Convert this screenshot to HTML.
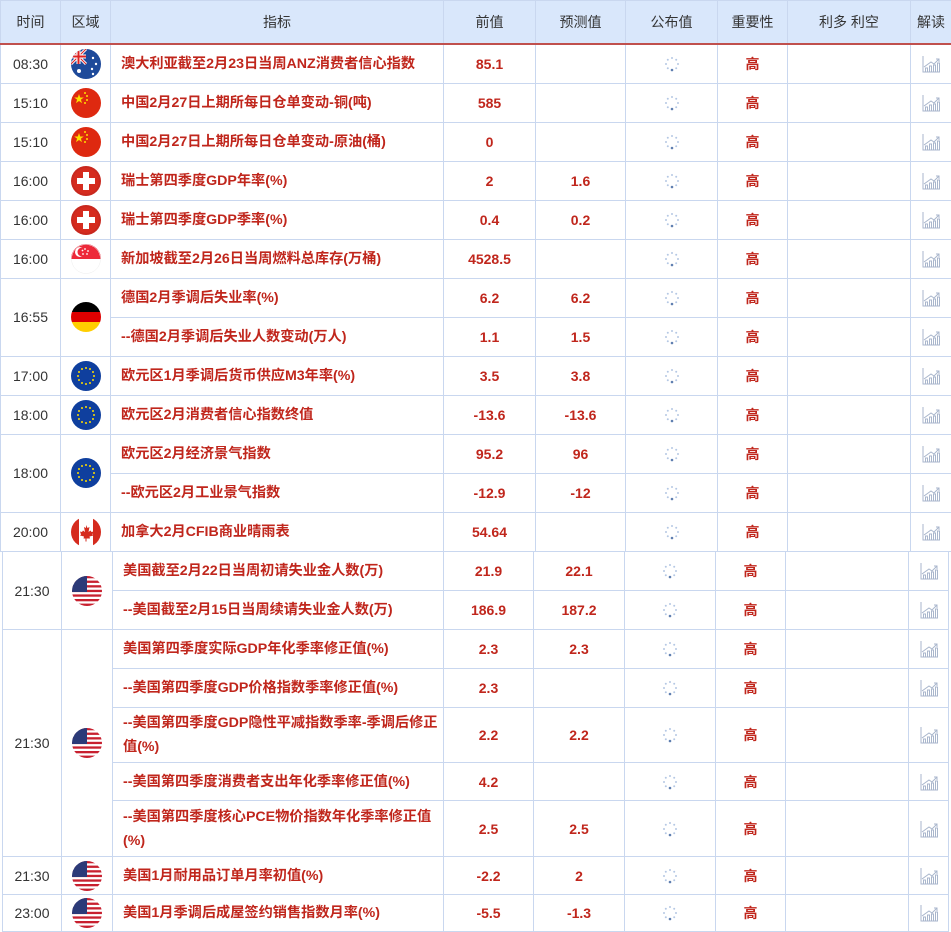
<!DOCTYPE html>
<html><head><meta charset="utf-8">
<style>
body{margin:0;width:951px;height:930px;overflow:hidden;background:#fff;font-family:"Liberation Sans","Noto Sans CJK SC",sans-serif;font-size:14px;color:#333;position:relative}
table{border-collapse:collapse;table-layout:fixed;position:absolute}
td,th{border:1px solid #c9d7ef;padding:0;text-align:center;vertical-align:middle;overflow:hidden}
th{background:#d9e7fb;font-weight:normal;color:#333;height:42px;border-bottom:2px solid #c0504d}
.n{color:#c0261c;font-weight:bold}
.i{text-align:left;padding-left:10px;color:#c0261c;font-weight:bold;line-height:24px;font-size:14.2px}
.g{color:#c0261c;font-weight:bold}
svg.f{width:30px;height:30px;display:block;margin:auto}
svg.l{width:16px;height:16px;display:block;margin:auto}
svg.c{width:20px;height:20px;display:block;margin:auto}
</style></head><body>
<svg width="0" height="0" style="position:absolute">
<defs>
<clipPath id="cc"><circle cx="15" cy="15" r="15"/></clipPath>
<symbol id="au" viewBox="0 0 30 30"><g clip-path="url(#cc)"><rect width="30" height="30" fill="#1e4a9a"/><rect width="15" height="15" fill="#1e4a9a"/><path d="M0 0L15 15M15 0L0 15" stroke="#fff" stroke-width="3"/><path d="M0 0L15 15M15 0L0 15" stroke="#d22" stroke-width="1"/><path d="M7.5 0V15M0 7.5H15" stroke="#fff" stroke-width="4"/><path d="M7.5 0V15M0 7.5H15" stroke="#d22" stroke-width="2"/><circle cx="8" cy="22" r="2" fill="#fff"/><circle cx="22" cy="9" r="1.2" fill="#fff"/><circle cx="25" cy="15" r="1.2" fill="#fff"/><circle cx="21" cy="20" r="1.2" fill="#fff"/><circle cx="22" cy="25" r="1.2" fill="#fff"/></g></symbol>
<symbol id="cn" viewBox="0 0 30 30"><circle cx="15" cy="15" r="15" fill="#de2910"/><path d="M8 6l1.2 3.5h3.6l-2.9 2.1 1.1 3.5L8 13l-3 2.1 1.1-3.5L3.2 9.5h3.6z" fill="#ffde00"/><circle cx="14" cy="5" r="1" fill="#ffde00"/><circle cx="16" cy="8" r="1" fill="#ffde00"/><circle cx="16" cy="12" r="1" fill="#ffde00"/><circle cx="14" cy="15" r="1" fill="#ffde00"/></symbol>
<symbol id="ch" viewBox="0 0 30 30"><circle cx="15" cy="15" r="15" fill="#c8281e"/><circle cx="15" cy="15" r="13" fill="#d52b1e"/><path d="M12 6h6v6h6v6h-6v6h-6v-6H6v-6h6z" fill="#fff"/></symbol>
<symbol id="sg" viewBox="0 0 30 30"><g clip-path="url(#cc)"><rect width="30" height="30" fill="#fff"/><rect width="30" height="15" fill="#ed2939"/><circle cx="9" cy="8" r="5" fill="#fff"/><circle cx="11" cy="8" r="4.5" fill="#ed2939"/><circle cx="14" cy="5" r=".9" fill="#fff"/><circle cx="17" cy="7" r=".9" fill="#fff"/><circle cx="16" cy="10" r=".9" fill="#fff"/><circle cx="12" cy="10" r=".9" fill="#fff"/><circle cx="11.5" cy="6.5" r=".9" fill="#fff"/></g><circle cx="15" cy="15" r="14.5" fill="none" stroke="#eee" stroke-width=".5"/></symbol>
<symbol id="de" viewBox="0 0 30 30"><g clip-path="url(#cc)"><rect width="30" height="10" fill="#000"/><rect y="10" width="30" height="10" fill="#dd0000"/><rect y="20" width="30" height="10" fill="#ffce00"/></g></symbol>
<symbol id="eu" viewBox="0 0 30 30"><circle cx="15" cy="15" r="15" fill="#0f3f9e"/><g fill="#ffdd00"><circle cx="15" cy="7" r="1"/><circle cx="19" cy="8" r="1"/><circle cx="22" cy="11" r="1"/><circle cx="23" cy="15" r="1"/><circle cx="22" cy="19" r="1"/><circle cx="19" cy="22" r="1"/><circle cx="15" cy="23" r="1"/><circle cx="11" cy="22" r="1"/><circle cx="8" cy="19" r="1"/><circle cx="7" cy="15" r="1"/><circle cx="8" cy="11" r="1"/><circle cx="11" cy="8" r="1"/></g></symbol>
<symbol id="ca" viewBox="0 0 30 30"><g clip-path="url(#cc)"><rect width="30" height="30" fill="#fff"/><rect width="8" height="30" fill="#d52b1e"/><rect x="22" width="8" height="30" fill="#d52b1e"/><path d="M15 8l1.5 3 2-1-1 5 2-1.5 1 1.5 2-.5-1 3 1 1-4 1 .5 2H15.5v3h-1v-3H12.5l.5-2-4-1 1-1-1-3 2 .5 1-1.5 2 1.5-1-5 2 1z" fill="#d52b1e"/></g></symbol>
<symbol id="us" viewBox="0 0 30 30"><g clip-path="url(#cc)"><rect width="30" height="30" fill="#fff"/><g fill="#c8202f"><rect y="0" width="30" height="2.3"/><rect y="4.6" width="30" height="2.3"/><rect y="9.2" width="30" height="2.3"/><rect y="13.8" width="30" height="2.3"/><rect y="18.4" width="30" height="2.3"/><rect y="23" width="30" height="2.3"/><rect y="27.6" width="30" height="2.4"/></g><rect width="15" height="16" fill="#2c3a78"/></g></symbol>
<symbol id="ld" viewBox="0 0 16 16"><g fill="#b5c8e4"><circle cx="8" cy="2" r="1"/><circle cx="12.2" cy="3.8" r="1"/><circle cx="14" cy="8" r="1"/><circle cx="12.2" cy="12.2" r="1"/><circle cx="3.8" cy="12.2" r="1"/><circle cx="2" cy="8" r="1"/><circle cx="3.8" cy="3.8" r="1"/></g><circle cx="8" cy="14" r="1.3" fill="#5f7fb0"/></symbol>
<symbol id="ch2" viewBox="0 0 20 20"><path d="M2 2V18H19" fill="none" stroke="#a9b6cc" stroke-width="1"/><path d="M4.5 18V14h2v4M8.5 18V12h2v6M12.5 18V11h2v7M16.5 18V9h2v9" fill="none" stroke="#a9b6cc" stroke-width="1"/><path d="M3 13L10 8l3 2 5-5M15 5h3v3" fill="none" stroke="#a9b6cc" stroke-width="1"/></symbol>
</defs></svg>

<table style="left:0;top:0;width:951px">
<colgroup><col style="width:60px"><col style="width:50px"><col style="width:333px"><col style="width:92px"><col style="width:90px"><col style="width:92px"><col style="width:70px"><col style="width:123px"><col style="width:41px"></colgroup>
<tr><th>时间</th><th>区域</th><th>指标</th><th>前值</th><th>预测值</th><th>公布值</th><th>重要性</th><th>利多 利空</th><th>解读</th></tr>
<tr style="height:39px"><td>08:30</td><td><svg class="f"><use href="#au"/></svg></td><td class="i">澳大利亚截至2月23日当周ANZ消费者信心指数</td><td class="n">85.1</td><td class="n"></td><td><svg class="l"><use href="#ld"/></svg></td><td class="g">高</td><td></td><td><svg class="c"><use href="#ch2"/></svg></td></tr>
<tr style="height:39px"><td>15:10</td><td><svg class="f"><use href="#cn"/></svg></td><td class="i">中国2月27日上期所每日仓单变动-铜(吨)</td><td class="n">585</td><td class="n"></td><td><svg class="l"><use href="#ld"/></svg></td><td class="g">高</td><td></td><td><svg class="c"><use href="#ch2"/></svg></td></tr>
<tr style="height:39px"><td>15:10</td><td><svg class="f"><use href="#cn"/></svg></td><td class="i">中国2月27日上期所每日仓单变动-原油(桶)</td><td class="n">0</td><td class="n"></td><td><svg class="l"><use href="#ld"/></svg></td><td class="g">高</td><td></td><td><svg class="c"><use href="#ch2"/></svg></td></tr>
<tr style="height:39px"><td>16:00</td><td><svg class="f"><use href="#ch"/></svg></td><td class="i">瑞士第四季度GDP年率(%)</td><td class="n">2</td><td class="n">1.6</td><td><svg class="l"><use href="#ld"/></svg></td><td class="g">高</td><td></td><td><svg class="c"><use href="#ch2"/></svg></td></tr>
<tr style="height:39px"><td>16:00</td><td><svg class="f"><use href="#ch"/></svg></td><td class="i">瑞士第四季度GDP季率(%)</td><td class="n">0.4</td><td class="n">0.2</td><td><svg class="l"><use href="#ld"/></svg></td><td class="g">高</td><td></td><td><svg class="c"><use href="#ch2"/></svg></td></tr>
<tr style="height:39px"><td>16:00</td><td><svg class="f"><use href="#sg"/></svg></td><td class="i">新加坡截至2月26日当周燃料总库存(万桶)</td><td class="n">4528.5</td><td class="n"></td><td><svg class="l"><use href="#ld"/></svg></td><td class="g">高</td><td></td><td><svg class="c"><use href="#ch2"/></svg></td></tr>
<tr style="height:39px"><td rowspan="2">16:55</td><td rowspan="2"><svg class="f"><use href="#de"/></svg></td><td class="i">德国2月季调后失业率(%)</td><td class="n">6.2</td><td class="n">6.2</td><td><svg class="l"><use href="#ld"/></svg></td><td class="g">高</td><td></td><td><svg class="c"><use href="#ch2"/></svg></td></tr>
<tr style="height:39px"><td class="i">--德国2月季调后失业人数变动(万人)</td><td class="n">1.1</td><td class="n">1.5</td><td><svg class="l"><use href="#ld"/></svg></td><td class="g">高</td><td></td><td><svg class="c"><use href="#ch2"/></svg></td></tr>
<tr style="height:39px"><td>17:00</td><td><svg class="f"><use href="#eu"/></svg></td><td class="i">欧元区1月季调后货币供应M3年率(%)</td><td class="n">3.5</td><td class="n">3.8</td><td><svg class="l"><use href="#ld"/></svg></td><td class="g">高</td><td></td><td><svg class="c"><use href="#ch2"/></svg></td></tr>
<tr style="height:39px"><td>18:00</td><td><svg class="f"><use href="#eu"/></svg></td><td class="i">欧元区2月消费者信心指数终值</td><td class="n">-13.6</td><td class="n">-13.6</td><td><svg class="l"><use href="#ld"/></svg></td><td class="g">高</td><td></td><td><svg class="c"><use href="#ch2"/></svg></td></tr>
<tr style="height:39px"><td rowspan="2">18:00</td><td rowspan="2"><svg class="f"><use href="#eu"/></svg></td><td class="i">欧元区2月经济景气指数</td><td class="n">95.2</td><td class="n">96</td><td><svg class="l"><use href="#ld"/></svg></td><td class="g">高</td><td></td><td><svg class="c"><use href="#ch2"/></svg></td></tr>
<tr style="height:39px"><td class="i">--欧元区2月工业景气指数</td><td class="n">-12.9</td><td class="n">-12</td><td><svg class="l"><use href="#ld"/></svg></td><td class="g">高</td><td></td><td><svg class="c"><use href="#ch2"/></svg></td></tr>
<tr style="height:39px"><td>20:00</td><td><svg class="f"><use href="#ca"/></svg></td><td class="i">加拿大2月CFIB商业晴雨表</td><td class="n">54.64</td><td class="n"></td><td><svg class="l"><use href="#ld"/></svg></td><td class="g">高</td><td></td><td><svg class="c"><use href="#ch2"/></svg></td></tr>
</table>

<table style="left:2px;top:551px;width:946px">
<colgroup><col style="width:59px"><col style="width:51px"><col style="width:331px"><col style="width:90px"><col style="width:91px"><col style="width:91px"><col style="width:70px"><col style="width:123px"><col style="width:40px"></colgroup>
<tr style="height:39px"><td rowspan="2">21:30</td><td rowspan="2"><svg class="f"><use href="#us"/></svg></td><td class="i">美国截至2月22日当周初请失业金人数(万)</td><td class="n">21.9</td><td class="n">22.1</td><td><svg class="l"><use href="#ld"/></svg></td><td class="g">高</td><td></td><td><svg class="c"><use href="#ch2"/></svg></td></tr>
<tr style="height:39px"><td class="i">--美国截至2月15日当周续请失业金人数(万)</td><td class="n">186.9</td><td class="n">187.2</td><td><svg class="l"><use href="#ld"/></svg></td><td class="g">高</td><td></td><td><svg class="c"><use href="#ch2"/></svg></td></tr>
<tr style="height:39px"><td rowspan="5">21:30</td><td rowspan="5"><svg class="f"><use href="#us"/></svg></td><td class="i">美国第四季度实际GDP年化季率修正值(%)</td><td class="n">2.3</td><td class="n">2.3</td><td><svg class="l"><use href="#ld"/></svg></td><td class="g">高</td><td></td><td><svg class="c"><use href="#ch2"/></svg></td></tr>
<tr style="height:39px"><td class="i">--美国第四季度GDP价格指数季率修正值(%)</td><td class="n">2.3</td><td class="n"></td><td><svg class="l"><use href="#ld"/></svg></td><td class="g">高</td><td></td><td><svg class="c"><use href="#ch2"/></svg></td></tr>
<tr style="height:55px"><td class="i">--美国第四季度GDP隐性平减指数季率-季调后修正值(%)</td><td class="n">2.2</td><td class="n">2.2</td><td><svg class="l"><use href="#ld"/></svg></td><td class="g">高</td><td></td><td><svg class="c"><use href="#ch2"/></svg></td></tr>
<tr style="height:38px"><td class="i">--美国第四季度消费者支出年化季率修正值(%)</td><td class="n">4.2</td><td class="n"></td><td><svg class="l"><use href="#ld"/></svg></td><td class="g">高</td><td></td><td><svg class="c"><use href="#ch2"/></svg></td></tr>
<tr style="height:56px"><td class="i">--美国第四季度核心PCE物价指数年化季率修正值(%)</td><td class="n">2.5</td><td class="n">2.5</td><td><svg class="l"><use href="#ld"/></svg></td><td class="g">高</td><td></td><td><svg class="c"><use href="#ch2"/></svg></td></tr>
<tr style="height:38px"><td>21:30</td><td><svg class="f"><use href="#us"/></svg></td><td class="i">美国1月耐用品订单月率初值(%)</td><td class="n">-2.2</td><td class="n">2</td><td><svg class="l"><use href="#ld"/></svg></td><td class="g">高</td><td></td><td><svg class="c"><use href="#ch2"/></svg></td></tr>
<tr style="height:37px"><td>23:00</td><td><svg class="f"><use href="#us"/></svg></td><td class="i">美国1月季调后成屋签约销售指数月率(%)</td><td class="n">-5.5</td><td class="n">-1.3</td><td><svg class="l"><use href="#ld"/></svg></td><td class="g">高</td><td></td><td><svg class="c"><use href="#ch2"/></svg></td></tr>
</table>
</body></html>
